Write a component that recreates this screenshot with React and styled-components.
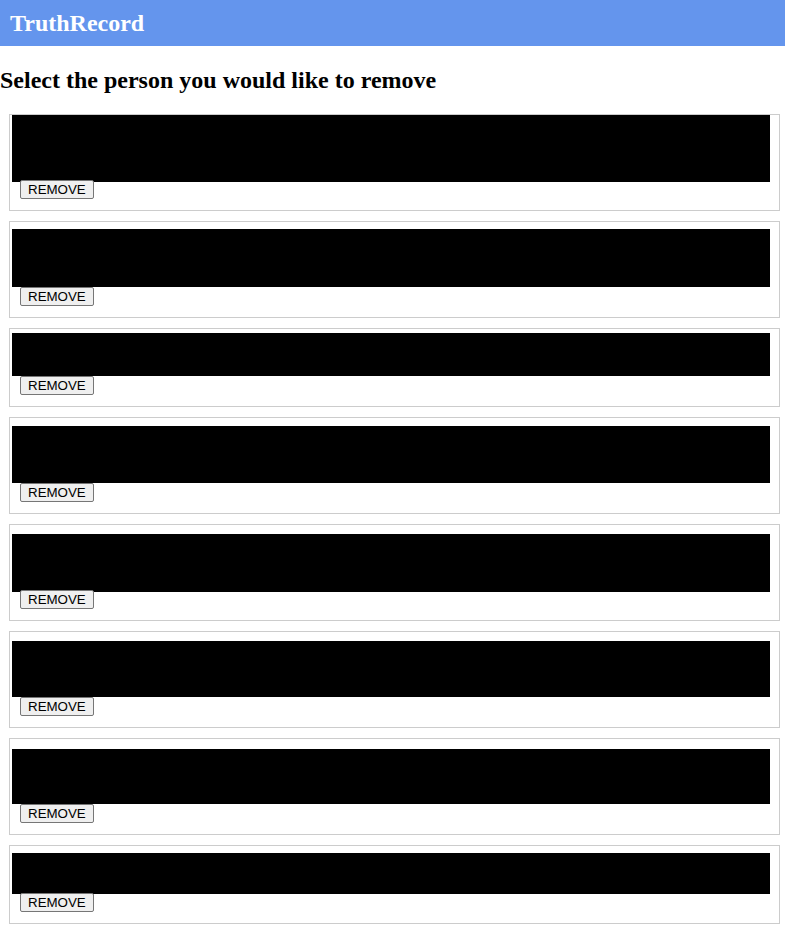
import React from 'react';
import styled, { createGlobalStyle } from 'styled-components';

const GlobalStyle = createGlobalStyle`
    body {
        margin: 0;
        font-family: "Liberation Serif", "Times New Roman", serif;
        background: #fff;
    }
`;

// redacted rows: offset of the black block inside the card, its height, and how far the button tucks under it
const people = [
    { top: 0, height: 67, tuck: 2 },
    { top: 7, height: 58, tuck: 0 },
    { top: 4, height: 43, tuck: 0 },
    { top: 8, height: 57, tuck: 0 },
    { top: 9, height: 58, tuck: 2 },
    { top: 9, height: 56, tuck: 0 },
    { top: 10, height: 55, tuck: 0 },
    { top: 7, height: 41, tuck: 1 },
];

function App() {
    return (
        <>
            <GlobalStyle />
            <Header>
                <Brand>TruthRecord</Brand>
            </Header>
            <Title>Select the person you would like to remove</Title>
            <List>
                {people.map((p, i) => (
                    <Card key={i}>
                        <Redacted $top={p.top} $height={p.height} />
                        <RemoveButton $tuck={p.tuck}>REMOVE</RemoveButton>
                    </Card>
                ))}
            </List>
        </>
    );
}

const Header = styled.header`
    height: 46px;
    background-color: #6495ed;
    display: flex;
    align-items: center;
    padding: 0 10px;
`;

const Brand = styled.h1`
    margin: 0;
    color: #fff;
    font-size: 24px;
    font-weight: 700;
`;

const Title = styled.h2`
    margin: 20px 0 0 0;
    font-size: 24px;
    font-weight: 700;
    line-height: 28px;
    color: #000;
`;

const List = styled.div`
    display: flex;
    flex-direction: column;
    gap: 10px;
    padding: 20px 5px 0 9px;
`;

const Card = styled.div`
    border: 1px solid #ccc;
    padding: 0 9px 11px 2px;
    display: flex;
    flex-direction: column;
    align-items: flex-start;
`;

const Redacted = styled.div`
    align-self: stretch;
    margin-top: ${p => p.$top}px;
    height: ${p => p.$height}px;
    background: #000;
`;

const RemoveButton = styled.button`
    position: relative;
    margin: -${p => p.$tuck}px 0 0 8px;
    height: 19px;
    padding: 0 7px;
    font-family: "Liberation Sans", Arial, sans-serif;
    font-size: 13.33px;
    color: #000;
    background: #efefef;
    border: 1px solid #767676;
    border-radius: 2px;
`;

export default App;
